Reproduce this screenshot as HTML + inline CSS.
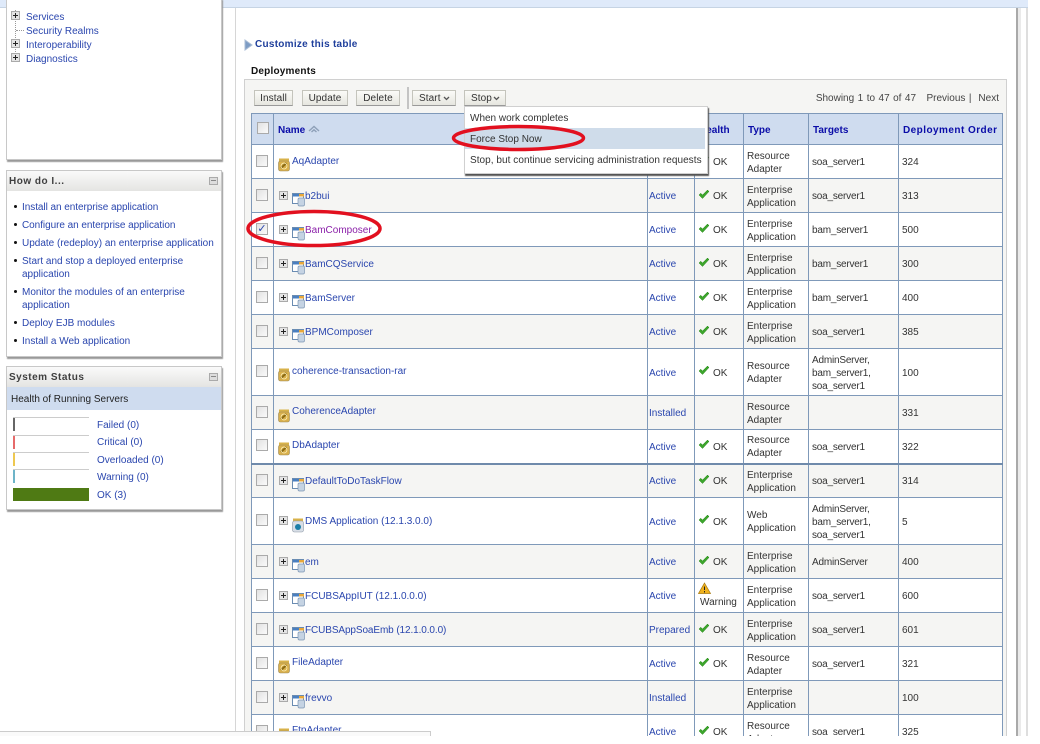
<!DOCTYPE html>
<html><head><meta charset="utf-8"><style>
html,body{margin:0;padding:0;background:#fff}
#p{position:relative;width:1040px;height:736px;overflow:hidden;background:#fff;font:10px/13px "Liberation Sans",sans-serif;color:#333;filter:blur(.35px)}
#p div,#p span.a,#p svg.a{position:absolute}
a,.l{color:#2a46ae;text-decoration:none}
.t{white-space:nowrap}
.pn{background:#fff;border:1px solid #c8c8c8;box-shadow:1px 2px 1px #999;box-sizing:border-box}
.hd{left:0;right:0;top:0;height:20px;background:linear-gradient(#fafafa,#e4e4e2);font-weight:bold;color:#3f3f3f;line-height:21px;padding-left:2px;letter-spacing:.5px}
.mn{width:9px;height:8px;background:#ddd;border:1px solid #aaa;box-sizing:border-box}
.mn:after{content:"";position:absolute;left:1px;right:1px;top:2px;height:1px;background:#888}
.b{width:3px;height:3px;border-radius:50%;background:#111;left:14px}
.btn{top:90px;height:16px;box-sizing:border-box;background:linear-gradient(#fbfbf8,#e6e6df);border:1px solid #c4c4bc;border-bottom-color:#999;text-align:center;line-height:15px;color:#333;letter-spacing:.1px}
.bar{left:13px;width:76px;height:14px;border-top:1px solid #ccc;box-sizing:border-box}
.bar i{position:absolute;left:0;top:0;width:2px;height:13px}
table{position:absolute;left:251px;top:113px;width:752px;table-layout:fixed;border-collapse:collapse;background:#fff}
td,th{border:1px solid #7f99b9;padding:2px 0 0 4px;overflow:visible;vertical-align:middle;position:relative;text-align:left;line-height:13px}
th{background:#cfdcef;color:#0a0ca8;font-weight:bold;height:28px;white-space:nowrap}
td{color:#333}
td:nth-child(5),td:nth-child(7){padding-left:3px}
td:nth-child(6){padding-left:3px;letter-spacing:-.2px}
tr.g td{background:#f5f5f3}
td.s{padding-left:1px}
td.c,th.c{padding:0}
td.c b,th.c b{display:block;width:12px;height:12px;margin-left:4px;border:1px solid #aaa;box-sizing:border-box;background:linear-gradient(135deg,#e2e2e2,#fafafa);position:relative;top:-1px}
td.n{padding-left:18px;white-space:nowrap;color:#2a46ae}
td.x{padding-left:31px}
td.n>span.v{position:relative;top:-2px}
td.x>span.v{top:0}
td.n svg,td.h svg{position:absolute}
td.h{padding-left:18px;white-space:nowrap}
svg.i{left:4px;top:50%;margin-top:-4px}
svg.ap{left:18px;top:50%;margin-top:-3px}
svg.e{left:5px;top:50%;margin-top:-5px}
td.h svg{left:3px;top:50%;margin-top:-7px}
</style></head><body><div id="p">
<svg width="0" height="0" style="position:absolute"><defs>
<symbol id="ad" viewBox="0 0 13 14"><rect x="1" y="0.5" width="10" height="3" fill="#d8b24a"/><rect x=".5" y="3" width="11" height="10" rx="2" fill="#d9b04c" stroke="#9b8a5c" stroke-width=".6"/><path d="M3 10 L8.5 5" stroke="#8a6a14" stroke-width="2" fill="none"/><circle cx="6" cy="8" r="3" fill="none" stroke="#fff3c0" stroke-width=".7"/></symbol>
<symbol id="ap" viewBox="0 0 13 14"><rect x=".5" y=".5" width="11" height="10" fill="#fff" stroke="#6a8cb2"/><rect x="1" y="1" width="10" height="2.5" fill="#4a7fc0"/><rect x="7" y="1" width="5" height="2.5" fill="#e8a83c"/><rect x="6" y="5" width="6.5" height="8" rx="1.5" fill="#c5d3e3" stroke="#7e97b4" stroke-width=".7"/></symbol>
<symbol id="dm" viewBox="0 0 12 15"><rect x="1" y=".5" width="10" height="3" fill="#d8b24a"/><rect x=".5" y="3" width="11" height="11" rx="2" fill="#d8dee6" stroke="#8c98a6" stroke-width=".6"/><circle cx="6" cy="9" r="3" fill="#1d7fa8"/></symbol>
<symbol id="ex" viewBox="0 0 9 9"><rect x=".5" y=".5" width="8" height="8" fill="#e4e4e4" stroke="#aaa"/><path d="M2 4.500H7M4.500 2V7" stroke="#222"/></symbol>
<symbol id="ok" viewBox="0 0 12 11"><path d="M1 6 L4.500 9.500 L11 2.500 L9.500 1 L4.500 6 L2.700 4.200Z" fill="#3da52c" stroke="#2d8a20" stroke-width=".5"/></symbol>
</defs></svg>

<div style="left:0;top:0;width:1028px;height:7px;background:#dfeafa;border-bottom:1px solid #c6d4e4"></div>
<div style="left:7px;top:-10px;width:18px;height:12px;border-radius:50%;background:#eef3f9;border:1px solid #a8b2bd"></div>

<!-- scroll strips -->
<div style="left:235px;top:8px;width:1px;height:728px;background:#d6d6d6"></div>
<div style="left:1016px;top:8px;width:2px;height:728px;background:#a9a9a9"></div>
<div style="left:1018px;top:8px;width:3px;height:728px;background:#eaeaea"></div>
<div style="left:1026px;top:8px;width:2px;height:728px;background:#dedede"></div>

<!-- left nav tree -->
<div class="pn" style="left:6px;top:-2px;width:216px;height:162px"></div>
<div style="left:15px;top:10px;height:52px;border-left:1px dotted #999;width:0"></div>
<svg class="a" style="left:11px;top:11px" width="9" height="9"><use href="#ex"/></svg>
<svg class="a" style="left:11px;top:39px" width="9" height="9"><use href="#ex"/></svg>
<svg class="a" style="left:11px;top:53px" width="9" height="9"><use href="#ex"/></svg>
<div style="left:16px;top:30px;width:8px;border-top:1px dotted #999"></div>
<div class="t l" style="left:26px;top:10px;padding-top:1px">Services</div>
<div class="t l" style="left:26px;top:24px;padding-top:1px">Security Realms</div>
<div class="t l" style="left:26px;top:38px;padding-top:1px">Interoperability</div>
<div class="t l" style="left:26px;top:52px;padding-top:1px">Diagnostics</div>

<!-- How do I -->
<div class="pn" style="left:6px;top:170px;width:216px;height:187px"><div class="hd">How do I...</div><div class="mn" style="left:202px;top:6px"></div></div>
<div class="b" style="top:205px"></div><div class="t l" style="left:22px;top:201px;letter-spacing:-.05px">Install an enterprise application</div>
<div class="b" style="top:223px"></div><div class="t l" style="left:22px;top:219px;letter-spacing:-.05px">Configure an enterprise application</div>
<div class="b" style="top:241px"></div><div class="t l" style="left:22px;top:237px">Update (redeploy) an enterprise application</div>
<div class="b" style="top:259px"></div><div class="t l" style="left:22px;top:255px">Start and stop a deployed enterprise<br>application</div>
<div class="b" style="top:290px"></div><div class="t l" style="left:22px;top:286px">Monitor the modules of an enterprise<br>application</div>
<div class="b" style="top:321px"></div><div class="t l" style="left:22px;top:317px">Deploy EJB modules</div>
<div class="b" style="top:339px"></div><div class="t l" style="left:22px;top:335px">Install a Web application</div>

<!-- System status -->
<div class="pn" style="left:6px;top:366px;width:216px;height:144px"><div class="hd">System Status</div><div class="mn" style="left:202px;top:6px"></div>
<div style="left:0;right:0;top:20px;height:23px;background:#cfdcef;color:#222;line-height:26px;padding-left:4px">Health of Running Servers</div></div>
<div class="bar" style="top:417px"><i style="background:#666"></i></div><div class="t l" style="left:97px;top:419px">Failed (0)</div>
<div class="bar" style="top:435px"><i style="background:#e66a6a"></i></div><div class="t l" style="left:97px;top:436px">Critical (0)</div>
<div class="bar" style="top:452px"><i style="background:#eec850"></i></div><div class="t l" style="left:97px;top:454px">Overloaded (0)</div>
<div class="bar" style="top:469px"><i style="background:#6db4c8"></i></div><div class="t l" style="left:97px;top:471px">Warning (0)</div>
<div style="left:13px;top:488px;width:76px;height:13px;background:#4f7a14"></div><div class="t l" style="left:97px;top:489px">OK (3)</div>

<!-- main -->
<svg class="a" style="left:244px;top:39px" width="9" height="12"><path d="M1 1 L8 6 L1 11Z" fill="#7d9cc4" stroke="#a9bcd6"/></svg>
<div class="t" style="left:255px;top:38px;color:#1f3f9c;font-weight:bold;letter-spacing:.27px">Customize this table</div>
<div class="t" style="left:251px;top:65px;color:#111;font-weight:bold;letter-spacing:.2px">Deployments</div>
<div style="left:244px;top:79px;width:763px;height:670px;background:#f5f5f3;border:1px solid #d0d0d0;box-sizing:border-box"></div>

<div class="btn" style="left:254px;width:39px">Install</div>
<div class="btn" style="left:302px;width:46px">Update</div>
<div class="btn" style="left:356px;width:44px">Delete</div>
<div style="left:407px;top:87px;width:2px;height:22px;background:#c4c4c4"></div>
<div class="btn" style="left:412px;width:44px;text-align:left;padding-left:6px">Start<svg class="a" style="left:30px;top:5px" width="7" height="5"><path d="M1 1L3.500 3.500L6 1" stroke="#555" stroke-width="1.300" fill="none"/></svg></div>
<div class="btn" style="left:464px;width:42px;text-align:left;padding-left:6px">Stop<svg class="a" style="left:28px;top:5px" width="7" height="5"><path d="M1 1L3.500 3.500L6 1" stroke="#555" stroke-width="1.300" fill="none"/></svg></div>
<div class="t" style="right:41px;top:92px;color:#444;word-spacing:.7px">Showing 1 to 47 of 47 &nbsp; Previous | &nbsp;Next</div>

<table><colgroup><col style="width:22px"><col style="width:374px"><col style="width:47px"><col style="width:49px"><col style="width:65px"><col style="width:90px"><col style="width:104px"></colgroup>
<tr><th class="c"><b style="margin-left:5px"></b></th><th>Name <svg width="12" height="8" style="vertical-align:0"><path d="M1 6 L6 1.500 L11 6 M3.500 7 L6 4.800 L8.500 7" stroke="#8ea0b8" stroke-width="1.400" fill="none"/></svg></th><th>Status</th><th>Health</th><th>Type</th><th>Targets</th><th style="letter-spacing:.45px">Deployment Order</th></tr>
<tr style="height:34px"><td class="c"><b></b></td><td class="n"><svg class="i" width="13" height="14"><use href="#ad"/></svg><span class="v" style="top:-1px">AqAdapter</span></td><td class="s"></td><td class="h"><svg width="12" height="11"><use href="#ok"/></svg>OK</td><td>Resource<br>Adapter</td><td>soa_server1</td><td>324</td></tr>
<tr class="g" style="height:34px"><td class="c"><b></b></td><td class="n x"><svg class="e" width="9" height="9"><use href="#ex"/></svg><svg class="ap" width="13" height="14"><use href="#ap"/></svg><span class="v">b2bui</span></td><td class="s"><a>Active</a></td><td class="h"><svg width="12" height="11"><use href="#ok"/></svg>OK</td><td>Enterprise<br>Application</td><td>soa_server1</td><td>313</td></tr>
<tr style="height:34px"><td class="c"><b style="color:#2a46ae;font:bold 11px/10px 'DejaVu Sans',sans-serif;text-align:center">&#10003;</b></td><td class="n x"><svg class="e" width="9" height="9"><use href="#ex"/></svg><svg class="ap" width="13" height="14"><use href="#ap"/></svg><span class="v" style="color:#8a1fa8">BamComposer</span></td><td class="s"><a>Active</a></td><td class="h"><svg width="12" height="11"><use href="#ok"/></svg>OK</td><td>Enterprise<br>Application</td><td>bam_server1</td><td>500</td></tr>
<tr class="g" style="height:34px"><td class="c"><b></b></td><td class="n x"><svg class="e" width="9" height="9"><use href="#ex"/></svg><svg class="ap" width="13" height="14"><use href="#ap"/></svg><span class="v">BamCQService</span></td><td class="s"><a>Active</a></td><td class="h"><svg width="12" height="11"><use href="#ok"/></svg>OK</td><td>Enterprise<br>Application</td><td>bam_server1</td><td>300</td></tr>
<tr style="height:34px"><td class="c"><b></b></td><td class="n x"><svg class="e" width="9" height="9"><use href="#ex"/></svg><svg class="ap" width="13" height="14"><use href="#ap"/></svg><span class="v">BamServer</span></td><td class="s"><a>Active</a></td><td class="h"><svg width="12" height="11"><use href="#ok"/></svg>OK</td><td>Enterprise<br>Application</td><td>bam_server1</td><td>400</td></tr>
<tr class="g" style="height:34px"><td class="c"><b></b></td><td class="n x"><svg class="e" width="9" height="9"><use href="#ex"/></svg><svg class="ap" width="13" height="14"><use href="#ap"/></svg><span class="v">BPMComposer</span></td><td class="s"><a>Active</a></td><td class="h"><svg width="12" height="11"><use href="#ok"/></svg>OK</td><td>Enterprise<br>Application</td><td>soa_server1</td><td>385</td></tr>
<tr style="height:47px"><td class="c"><b></b></td><td class="n"><svg class="i" width="13" height="14"><use href="#ad"/></svg><span class="v">coherence-transaction-rar</span></td><td class="s"><a>Active</a></td><td class="h"><svg width="12" height="11"><use href="#ok"/></svg>OK</td><td>Resource<br>Adapter</td><td>AdminServer,<br>bam_server1,<br>soa_server1</td><td>100</td></tr>
<tr class="g" style="height:34px"><td class="c"><b></b></td><td class="n"><svg class="i" width="13" height="14"><use href="#ad"/></svg><span class="v">CoherenceAdapter</span></td><td class="s"><a>Installed</a></td><td></td><td>Resource<br>Adapter</td><td></td><td>331</td></tr>
<tr style="height:34px"><td class="c" style="border-bottom:2px solid #6f8aab"><b></b></td><td class="n" style="border-bottom:2px solid #6f8aab"><svg class="i" width="13" height="14"><use href="#ad"/></svg><span class="v">DbAdapter</span></td><td class="s" style="border-bottom:2px solid #6f8aab"><a>Active</a></td><td class="h" style="border-bottom:2px solid #6f8aab"><svg width="12" height="11"><use href="#ok"/></svg>OK</td><td style="border-bottom:2px solid #6f8aab">Resource<br>Adapter</td><td style="border-bottom:2px solid #6f8aab">soa_server1</td><td style="border-bottom:2px solid #6f8aab">322</td></tr>
<tr class="g" style="height:34px"><td class="c"><b></b></td><td class="n x"><svg class="e" width="9" height="9"><use href="#ex"/></svg><svg class="ap" width="13" height="14"><use href="#ap"/></svg><span class="v">DefaultToDoTaskFlow</span></td><td class="s"><a>Active</a></td><td class="h"><svg width="12" height="11"><use href="#ok"/></svg>OK</td><td>Enterprise<br>Application</td><td>soa_server1</td><td>314</td></tr>
<tr style="height:47px"><td class="c"><b></b></td><td class="n x"><svg class="e" width="9" height="9"><use href="#ex"/></svg><svg class="ap" width="12" height="15"><use href="#dm"/></svg><span class="v" style="top:-1px">DMS Application (12.1.3.0.0)</span></td><td class="s"><a>Active</a></td><td class="h"><svg width="12" height="11"><use href="#ok"/></svg>OK</td><td>Web<br>Application</td><td>AdminServer,<br>bam_server1,<br>soa_server1</td><td>5</td></tr>
<tr class="g" style="height:34px"><td class="c"><b></b></td><td class="n x"><svg class="e" width="9" height="9"><use href="#ex"/></svg><svg class="ap" width="13" height="14"><use href="#ap"/></svg><span class="v">em</span></td><td class="s"><a>Active</a></td><td class="h"><svg width="12" height="11"><use href="#ok"/></svg>OK</td><td>Enterprise<br>Application</td><td>AdminServer</td><td>400</td></tr>
<tr style="height:34px"><td class="c"><b></b></td><td class="n x"><svg class="e" width="9" height="9"><use href="#ex"/></svg><svg class="ap" width="13" height="14"><use href="#ap"/></svg><span class="v">FCUBSAppIUT (12.1.0.0.0)</span></td><td class="s"><a>Active</a></td><td style="padding-left:5px;white-space:nowrap"><svg width="13" height="12" style="position:absolute;left:3px;top:3px"><path d="M6.500 1 L12.500 11.500 H.5Z" fill="#f0b21e" stroke="#a87a10" stroke-width=".7"/><path d="M6.500 4.500V8M6.500 9V10.500" stroke="#222"/></svg><span style="position:relative;top:6px">Warning</span></td><td>Enterprise<br>Application</td><td>soa_server1</td><td>600</td></tr>
<tr class="g" style="height:34px"><td class="c"><b></b></td><td class="n x"><svg class="e" width="9" height="9"><use href="#ex"/></svg><svg class="ap" width="13" height="14"><use href="#ap"/></svg><span class="v" style="letter-spacing:-.1px">FCUBSAppSoaEmb (12.1.0.0.0)</span></td><td class="s"><a>Prepared</a></td><td class="h"><svg width="12" height="11"><use href="#ok"/></svg>OK</td><td>Enterprise<br>Application</td><td>soa_server1</td><td>601</td></tr>
<tr style="height:34px"><td class="c"><b></b></td><td class="n"><svg class="i" width="13" height="14"><use href="#ad"/></svg><span class="v">FileAdapter</span></td><td class="s"><a>Active</a></td><td class="h"><svg width="12" height="11"><use href="#ok"/></svg>OK</td><td>Resource<br>Adapter</td><td>soa_server1</td><td>321</td></tr>
<tr class="g" style="height:34px"><td class="c"><b></b></td><td class="n x"><svg class="e" width="9" height="9"><use href="#ex"/></svg><svg class="ap" width="13" height="14"><use href="#ap"/></svg><span class="v">frevvo</span></td><td class="s"><a>Installed</a></td><td></td><td>Enterprise<br>Application</td><td></td><td>100</td></tr>
<tr style="height:34px"><td class="c"><b></b></td><td class="n"><svg class="i" width="13" height="14"><use href="#ad"/></svg><span class="v">FtpAdapter</span></td><td class="s"><a>Active</a></td><td class="h"><svg width="12" height="11"><use href="#ok"/></svg>OK</td><td>Resource<br>Adapter</td><td>soa_server1</td><td>325</td></tr>
</table>

<!-- stop menu -->
<div style="left:464px;top:106px;width:244px;height:68px;background:#fff;border:1px solid #d0d0d0;box-sizing:border-box;box-shadow:1px 2px 1px #555"></div>
<div style="left:465px;top:128px;width:240px;height:21px;background:#cfdcea"></div>
<div class="t" style="left:470px;top:112px">When work completes</div>
<div class="t" style="left:470px;top:133px">Force Stop Now</div>
<div class="t" style="left:470px;top:154px;letter-spacing:.05px">Stop, but continue servicing administration requests</div>

<!-- red ellipses -->
<svg class="a" style="left:0;top:0" width="1040" height="736" fill="none" stroke="#e2101f" stroke-width="3.500"><ellipse cx="518.500" cy="138" rx="65" ry="11.500"/><ellipse cx="314" cy="228.500" rx="66" ry="17"/></svg>

<!-- bottom bar -->
<div style="left:0;top:731px;width:431px;height:5px;background:#fafafa;border-top:1px solid #ccc;border-right:1px solid #ccc;box-sizing:border-box"></div>
</div></body></html>
